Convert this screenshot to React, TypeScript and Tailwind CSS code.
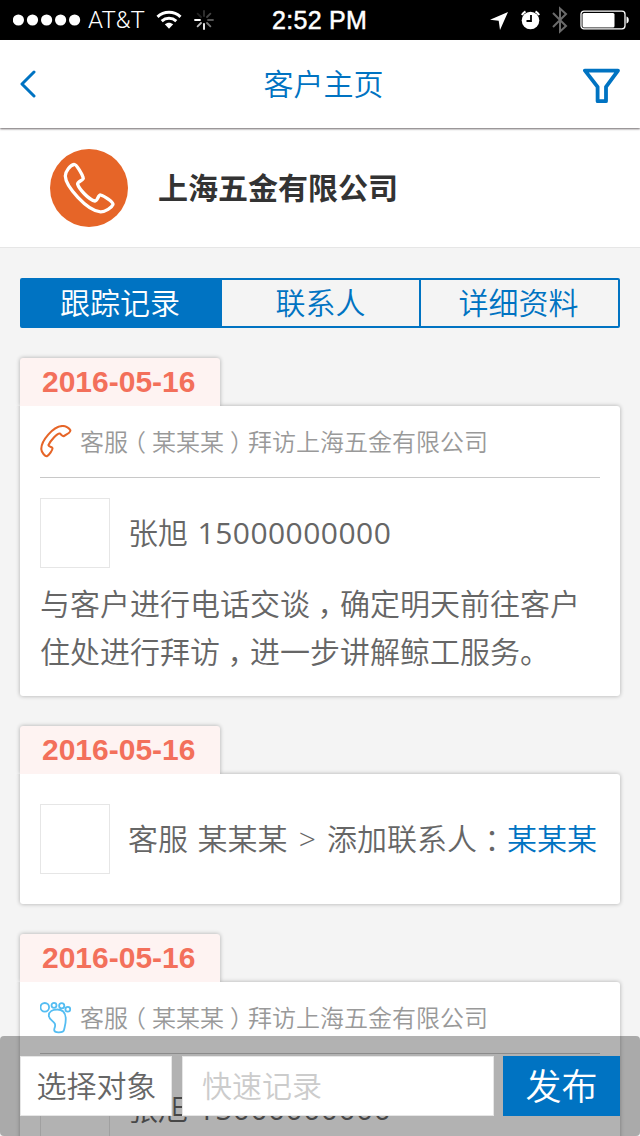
import type { ReactNode } from "react";

function StatusBar() {
  return (
    <div className="flex h-10 shrink-0 items-center bg-black text-white">
      <div className="flex w-[272px] items-center pl-[13px]">
        <svg width="68" height="12" viewBox="0 0 68 12" fill="#fff">
          <circle cx="5.4" cy="6" r="5.6" />
          <circle cx="19.5" cy="6" r="5.6" />
          <circle cx="33.6" cy="6" r="5.6" />
          <circle cx="47.6" cy="6" r="5.6" />
          <circle cx="61.6" cy="6" r="5.6" />
        </svg>
        <span className="ml-[7px] w-[68px] font-['Roboto',sans-serif] text-[24px] leading-[42px] font-light">AT&amp;T</span>
        <svg width="26" height="20" viewBox="0 0 26 20" fill="none" stroke="#fff" strokeWidth="3">
          <path d="M1.5 6.8C8 .8 18 .8 24.5 6.8" />
          <path d="M5.7 11.2c4.3-3.8 10.3-3.8 14.6 0" />
          <path d="M8.8 14.3c2.6-2.2 5.8-2.2 8.4 0L13 18.8z" fill="#fff" stroke="none" />
        </svg>
        <svg className="ml-[12px]" width="20" height="20" viewBox="0 0 20 20" strokeWidth="1.8" strokeLinecap="round">
          <path d="M10 1v5" stroke="#333" />
          <path d="M16.4 3.6 13 7" stroke="#444" />
          <path d="M19 10h-5" stroke="#555" />
          <path d="M16.4 16.4 13 13" stroke="#777" />
          <path d="M10 19v-5" stroke="#fff" />
          <path d="M3.6 16.4 7 13" stroke="#bbb" />
          <path d="M1 10h5" stroke="#fff" />
          <path d="M3.6 3.6 7 7" stroke="#222" />
        </svg>
      </div>
      <span className="w-[218px] font-['Liberation_Sans',sans-serif] text-[25px] leading-10 font-normal tracking-[0.3px] whitespace-nowrap [-webkit-text-stroke:0.5px_#fff]">2:52 PM</span>
      <svg width="19" height="20" viewBox="0 0 19 20" fill="#fff">
        <path d="M18 2 0 9.8l8.700.9L10 20z" />
      </svg>
      <svg className="ml-[12px]" width="20" height="20" viewBox="0 0 20 20" fill="none">
        <circle cx="9.5" cy="10.5" r="8.8" fill="#fff" />
        <path d="M10 5v6H5.5" stroke="#000" strokeWidth="1.8" />
        <path d="M.8 5A10 10 0 0 1 4.5 1.5M14.5 1.5A10 10 0 0 1 18.2 5" stroke="#fff" strokeWidth="2" />
      </svg>
      <svg className="ml-[11px]" width="17" height="28" viewBox="0 0 17 28" fill="none" stroke="#6b6b6b" strokeWidth="2">
        <path d="m1 7 13 13-6 5.5v-23l6 5.500L1 21" />
      </svg>
      <svg className="ml-[11px]" width="50" height="20" viewBox="0 0 50 20" fill="none">
        <rect x="1" y="1.2" width="44" height="17.6" rx="3" stroke="#fff" strokeWidth="1.3" />
        <rect x="2.5" y="3" width="32" height="14.6" rx="1.5" fill="#fff" />
        <path d="M46.5 6.5c3 .8 3 6.200 0 7z" fill="#fff" />
      </svg>
    </div>
  );
}

function NavBar() {
  return (
    <div className="relative z-10 flex h-[88px] shrink-0 items-center bg-white px-5 text-[#0073c2] shadow-[0_1px_2px_rgba(30,22,26,0.65)]">
      <svg width="37" height="28" viewBox="0 0 37 28" fill="none" stroke="currentColor" strokeWidth="3" strokeLinecap="round" strokeLinejoin="round">
        <path d="M14 2 2 14l12 12" />
      </svg>
      <h1 className="flex-1 pl-[7px] text-center text-[30px] leading-[88px] font-[350]">客户主页</h1>
      <svg className="mt-1" width="37" height="36" viewBox="0 0 37 36" fill="none" stroke="currentColor" strokeWidth="3.8" strokeLinejoin="round">
        <path d="M2 2.600h33L23 18.800V33.200h-8.400V18.800z" />
      </svg>
    </div>
  );
}

function Tabs() {
  return (
    <div className="mx-5 mt-[30px] flex h-[50px] shrink-0 overflow-hidden rounded-[2px] border-2 border-[#0073c2] text-center text-[30px] leading-[46px] text-[#0073c2]">
      <div className="w-[200px] bg-[#0073c2] pr-1 text-white">跟踪记录</div>
      <div className="w-[197px]">联系人</div>
      <div className="flex-1 border-l-2 border-[#0073c2] pr-0.5">详细资料</div>
    </div>
  );
}

function PhoneIcon() {
  return (
    <svg width="33" height="33" viewBox="0 0 33 33" fill="none" stroke="#e66528" strokeWidth="2.100" strokeLinejoin="round" strokeLinecap="round">
      <path d="M22.500 1c3.500-.200 7 2.400 7.800 4.200.7 1.500-3.500 4.300-6.300 5.800-1.500.7-3-2-4.200-2.500-2.400-.6-9 7-11.300 11.500-.6 1.500 3.800 1.800 4 3.200.2 2-3.700 7-5.500 8-1.500.6-5.500-3.500-5.700-7C1 16 13 1.300 22.500 1z" />
    </svg>
  );
}

function FootIcon() {
  return (
    <svg width="33" height="33" viewBox="0 0 33 33" fill="none" stroke="#54bdf2" strokeWidth="1.800">
      <circle cx="4.800" cy="6.300" r="4.300" />
      <circle cx="14" cy="4.300" r="2.500" />
      <circle cx="21.700" cy="4.800" r="2.600" />
      <circle cx="27.800" cy="8.300" r="2.400" />
      <path d="M8.800 14.500c0-4 4-6 8.500-6 5.500 0 8 3.500 8.400 8 .4 6-1 9-1.700 12.500-.6 2.800-9.500 3.500-9.800.2-.2-2.500 1.800-3.500.6-6.500-1.200-2.700-6-4-6-8.200z" />
    </svg>
  );
}

function Punct({ children }: { children: string }) {
  return (
    <span className="inline-block w-[1em] text-center whitespace-nowrap [font-feature-settings:'halt'] [text-spacing-trim:space-all]">
      {children}
    </span>
  );
}

function Entry({ className, children }: { className: string; children: ReactNode }) {
  return (
    <section className="mx-5 mt-[30px] shrink-0">
      <div className="h-12 w-[200px] rounded-t-[3px] bg-[#fef3f2] pl-[22px] font-['Liberation_Sans',sans-serif] text-[30px] leading-[48px] font-bold text-[#f3705b] shadow-[0_0_4px_rgba(0,0,0,0.3)]">
        2016-05-16
      </div>
      <div className={`relative rounded-b-[3px] rounded-tr-[3px] bg-white px-5 shadow-[0_0_4px_rgba(0,0,0,0.3)] [clip-path:polygon(-5px_0,200px_0,200px_-5px,605px_-5px,605px_400px,-5px_400px)] ${className}`}>
        {children}
      </div>
    </section>
  );
}

function VisitTitle({ icon }: { icon: ReactNode }) {
  return (
    <div className="flex h-[72px] items-center border-b border-[#c8c8c8] text-[24px] text-[#999]">
      <span className="w-10">{icon}</span>
      <span className="whitespace-nowrap">
        客服<Punct>（</Punct>某某某<Punct>）</Punct>拜访上海五金有限公司
      </span>
    </div>
  );
}

function Person({ children }: { children: ReactNode }) {
  return (
    <div className="flex h-[70px] items-center whitespace-pre">
      <div className="mr-[18px] size-[70px] border border-[#e6e6e6] bg-white" />
      <div className="pb-0.5 [word-spacing:1.8px]">{children}</div>
    </div>
  );
}

function Contact() {
  return (
    <Person>
      张旭 <span className="font-normal tracking-[0.45px]">15000000000</span>
    </Person>
  );
}

export default function App() {
  return (
    <div className="relative flex h-[1136px] w-[640px] flex-col overflow-hidden bg-[#f4f4f4] font-['Open_Sans','Noto_Sans_CJK_SC',sans-serif] text-[30px] font-[350] text-[#666]">
      <StatusBar />
      <NavBar />
      <div className="flex h-[120px] shrink-0 items-center border-b border-[#e6e6e6] bg-white pl-[50px]">
        <svg width="78" height="78" viewBox="0 0 78 78" fill="none">
          <circle cx="39" cy="39" r="39" fill="#e66528" />
          <path d="M24 15.500c2.500-.5 8.500 10.500 9.300 13.500.7 2-6 3.500-5.700 6C29 40 39 51 45 52c2.500.3 3.300-6.500 5.500-6 3.500.8 13 7 12.500 9.500-1 3-8 7.500-12.500 7.300C37 62 15.500 37 15.300 27c0-4.500 5-11 8.700-11.500z" stroke="#fff" strokeWidth="3.300" strokeLinejoin="round" />
        </svg>
        <h2 className="ml-[30px] text-[30px] font-bold text-[#333]">上海五金有限公司</h2>
      </div>
      <Tabs />
      <Entry className="h-[290px]">
        <VisitTitle icon={<PhoneIcon />} />
        <div className="mt-5">
          <Contact />
        </div>
        <p className="mt-3 leading-[48px] whitespace-nowrap">
          与客户进行电话交谈<Punct>，</Punct>确定明天前往客户
          <br />
          住处进行拜访<Punct>，</Punct>进一步讲解鲸工服务。
        </p>
      </Entry>
      <Entry className="h-[130px] pt-[30px]">
        <Person>
          客服 某某某 <span className="px-[1.5px]">&gt;</span> 添加联系人<Punct>：</Punct><span className="text-[#0073c2]">某某某</span>
        </Person>
      </Entry>
      <Entry className="h-[290px]">
        <VisitTitle icon={<FootIcon />} />
        <div className="mt-5">
          <Contact />
        </div>
      </Entry>
      <div className="absolute inset-x-0 bottom-0 z-20 flex h-[100px] rounded-[4px] bg-black/30 px-5 pt-5 leading-[58px]">
        <button className="h-[60px] w-[152px] border border-[#e6e6e6] bg-white pl-px text-center">选择对象</button>
        <div className="ml-[10px] h-[60px] w-[312px] border border-[#e6e6e6] bg-white pl-[19px] text-[#ccc]">快速记录</div>
        <button className="ml-[9px] h-[60px] w-[117px] bg-[#0073c2] text-center text-[36px] leading-[62px] text-white">发布</button>
      </div>
    </div>
  );
}
